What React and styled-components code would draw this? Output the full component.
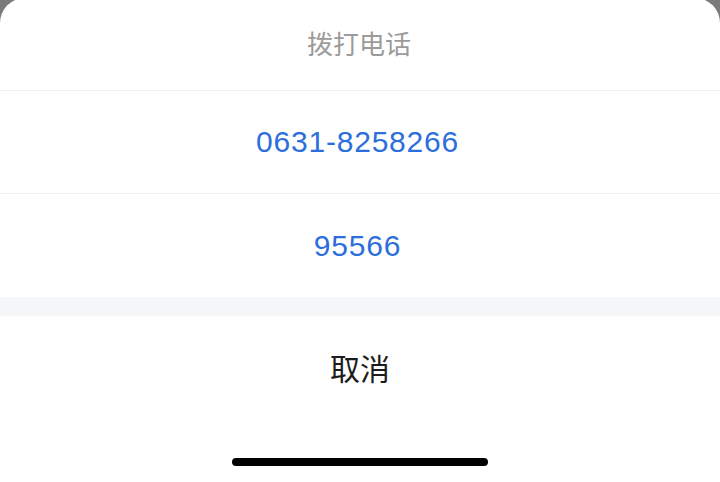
import React from "react";
import styled, { createGlobalStyle } from "styled-components";

const GlobalStyle = createGlobalStyle`
  html, body {
    margin: 0;
    padding: 0;
    height: 100%;
    background: #7b7b7b;
    overflow: hidden;
  }
  #root {
    height: 100%;
  }
`;

const Page = styled.div`
  height: 100%;
  display: flex;
  flex-direction: column;
  font-family: "Liberation Sans", "Noto Sans CJK SC", sans-serif;
`;

const Sheet = styled.div`
  flex: 1;
  margin-top: -2px;
  background: #ffffff;
  border-radius: 25px 25px 0 0;
  display: flex;
  flex-direction: column;
  overflow: hidden;
`;

const Title = styled.div`
  height: 93px;
  display: flex;
  align-items: center;
  justify-content: center;
  padding: 0 2px 2px 0;
  box-sizing: border-box;
  border-bottom: 1px solid #efefef;
  font-family: "Noto Sans CJK SC", sans-serif;
  font-size: 26px;
  line-height: 1;
  color: #9b9b9b;
`;

const Option = styled.div`
  height: ${(p) => p.$h}px;
  display: flex;
  align-items: center;
  justify-content: center;
  padding-right: ${(p) => (p.$cancel ? 0 : 5)}px;
  box-sizing: border-box;
  border-bottom: ${(p) => (p.$divider ? "1px solid #efefef" : "none")};
  font-size: 30px;
  letter-spacing: ${(p) => (p.$cancel ? 0 : 0.8)}px;
  line-height: 1;
  color: ${(p) => (p.$cancel ? "#1c1c1c" : "#2c6fdc")};
  font-family: ${(p) =>
    p.$cancel
      ? `"Noto Sans CJK SC", sans-serif`
      : `"Liberation Sans", "Noto Sans CJK SC", sans-serif`};
`;

const Gap = styled.div`
  height: 19px;
  background: #f5f6f7;
`;

const SafeArea = styled.div`
  flex: 1;
  display: flex;
  justify-content: center;
  padding-top: 40px;
`;

const HomeBar = styled.div`
  width: 256px;
  height: 8px;
  border-radius: 4px;
  background: #000000;
`;

const phones = ["0631-8258266", "95566"];

export default function App() {
  return (
    <>
      <GlobalStyle />
      <Page>
        <Sheet>
          <Title>拨打电话</Title>
          {phones.map((num, i) => (
            <Option key={num} $h={103} $divider={i < phones.length - 1}>
              {num}
            </Option>
          ))}
          <Gap />
          <Option $cancel $h={102}>取消</Option>
          <SafeArea>
            <HomeBar />
          </SafeArea>
        </Sheet>
      </Page>
    </>
  );
}
